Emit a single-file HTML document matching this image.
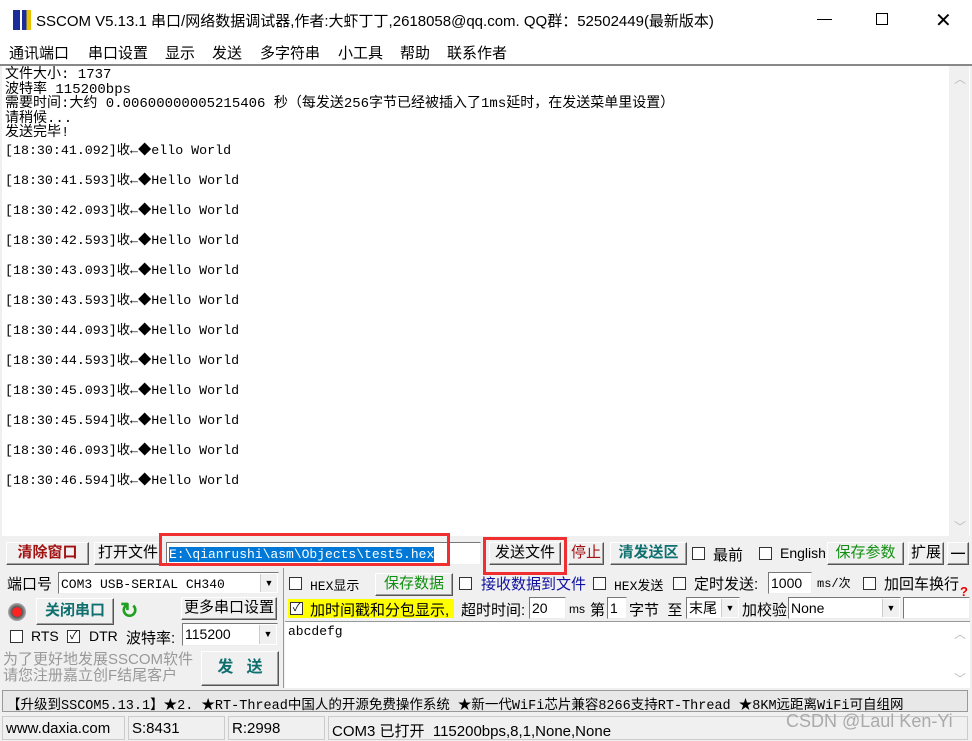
<!DOCTYPE html>
<html><head><meta charset="utf-8"><style>
*{margin:0;padding:0;box-sizing:border-box}
body{width:972px;height:741px;background:#f0f0f0;position:relative;overflow:hidden;font-family:"Liberation Sans","Noto Sans CJK SC",sans-serif;font-size:14px;color:#000}
.a{position:absolute;white-space:nowrap}
.m{font-family:"Liberation Mono","Noto Sans CJK SC",monospace;font-size:13px}
.btn{position:absolute;background:#f0f0f0;border:1px solid;border-color:#fff #555 #555 #fff;box-shadow:inset -1px -1px 0 #a0a0a0;text-align:center;white-space:nowrap}
.in{position:absolute;background:#fff;border:1px solid;border-color:#777 #eee #eee #777;white-space:nowrap;overflow:hidden;line-height:16px}
.cb{position:absolute;width:13px;height:13px;background:#fff;border:1px solid #333;font-size:11px;line-height:11px;text-align:center}
.dd{position:absolute;right:1px;top:1px;bottom:1px;width:17px;background:#f0f0f0;border-left:1px solid #ccc;font-size:9px;line-height:18px;text-align:center}
.mn{position:absolute;top:42px;font-size:15px}
</style></head><body>
<div class="a" style="left:0;top:0;width:972px;height:40px;background:#fff"></div>
<div class="a" style="left:13px;top:10px;width:18px;height:20px;background:linear-gradient(90deg,#1a2c9a 0 40%,#fff 40% 50%,#1a2c9a 50% 75%,#e8c000 75%)"></div>
<div class="a" style="left:36px;top:10px;font-size:15px">SSCOM V5.13.1 串口/网络数据调试器,作者:大虾丁丁,2618058@qq.com. QQ群：52502449(最新版本)</div>
<div class="a" style="left:817px;top:19px;width:15px;height:1px;background:#000"></div>
<div class="a" style="left:876px;top:13px;width:12px;height:12px;border:1px solid #000"></div>
<div class="a" style="left:935px;top:8px;font-size:20px;font-weight:100">✕</div>
<div class="a" style="left:0;top:40px;width:972px;height:25px;background:#fff"></div>
<div class="mn" style="left:9px">通讯端口</div>
<div class="mn" style="left:88px">串口设置</div>
<div class="mn" style="left:165px">显示</div>
<div class="mn" style="left:212px">发送</div>
<div class="mn" style="left:260px">多字符串</div>
<div class="mn" style="left:338px">小工具</div>
<div class="mn" style="left:400px">帮助</div>
<div class="mn" style="left:447px">联系作者</div>
<div class="a" style="left:0;top:64px;width:972px;height:2px;background:#888"></div>
<div class="a" style="left:2px;top:66px;width:968px;height:470px;background:#fff"></div>
<div class="a" style="left:949px;top:66px;width:20px;height:470px;background:#f0f0f0"></div>
<div class="a" style="left:954px;top:70px;color:#bbb;font-size:12px">︿</div>
<div class="a" style="left:954px;top:518px;color:#bbb;font-size:12px">﹀</div>
<div class="a m" style="left:5px;top:68px;line-height:14.5px;font-size:14px">文件大小: 1737<br>波特率 115200bps<br>需要时间:大约 0.00600000005215406 秒（每发送256字节已经被插入了1ms延时，在发送菜单里设置）<br>请稍候...<br>发送完毕!</div>
<div class="a m" style="left:5px;top:136px;line-height:30px;font-size:13.3px">[18:30:41.092]收←◆ello World<br>[18:30:41.593]收←◆Hello World<br>[18:30:42.093]收←◆Hello World<br>[18:30:42.593]收←◆Hello World<br>[18:30:43.093]收←◆Hello World<br>[18:30:43.593]收←◆Hello World<br>[18:30:44.093]收←◆Hello World<br>[18:30:44.593]收←◆Hello World<br>[18:30:45.093]收←◆Hello World<br>[18:30:45.594]收←◆Hello World<br>[18:30:46.093]收←◆Hello World<br>[18:30:46.594]收←◆Hello World</div>
<!-- row 1 -->
<div class="btn" style="left:6px;top:542px;width:83px;height:23px;color:#a01010;font-weight:bold;line-height:20px;font-size:15px">清除窗口</div>
<div class="btn" style="left:94px;top:542px;width:68px;height:23px;line-height:20px;font-size:15px">打开文件</div>
<div class="in" style="left:166px;top:542px;width:315px;height:23px;padding:2px 2px"><span class="m" style="background:#0078d7;color:#fff">E:\qianrushi\asm\Objects\test5.hex</span></div>
<div class="a" style="left:159px;top:533px;width:291px;height:33px;border:3px solid #f03030"></div>
<div class="btn" style="left:489px;top:542px;width:72px;height:23px;line-height:20px;font-size:15px">发送文件</div>
<div class="a" style="left:483px;top:537px;width:84px;height:38px;border:3px solid #f03030"></div>
<div class="btn" style="left:568px;top:542px;width:36px;height:23px;line-height:20px;color:#a01010;font-size:15px">停止</div>
<div class="btn" style="left:610px;top:542px;width:77px;height:23px;line-height:20px;color:#107070;font-weight:bold;font-size:15px">清发送区</div>
<div class="cb" style="left:692px;top:547px"></div><div class="a" style="left:713px;top:544px;font-size:15px">最前</div>
<div class="cb" style="left:759px;top:547px"></div><div class="a" style="left:780px;top:545px">English</div>
<div class="btn" style="left:827px;top:542px;width:77px;height:23px;line-height:20px;color:#109010;font-size:15px">保存参数</div>
<div class="btn" style="left:908px;top:542px;width:36px;height:23px;line-height:20px;font-size:15px">扩展</div>
<div class="btn" style="left:947px;top:542px;width:22px;height:23px;line-height:18px;font-weight:bold">—</div>
<!-- left panel -->
<div class="a" style="left:7px;top:573px;font-size:15px">端口号</div>
<div class="in" style="left:58px;top:572px;width:221px;height:22px;padding:2px 2px"><span class="m">COM3 USB-SERIAL CH340</span><div class="dd">▼</div></div>
<div class="a" style="left:8px;top:603px;width:18px;height:18px;border-radius:50%;background:radial-gradient(#f22 35%,#555 40%,#aaa 70%)"></div>
<div class="btn" style="left:36px;top:598px;width:78px;height:27px;line-height:24px;color:#107070;font-weight:bold;font-size:15px">关闭串口</div>
<div class="a" style="left:120px;top:598px;color:#20a020;font-size:22px;font-weight:bold">↻</div>
<div class="btn" style="left:181px;top:597px;width:96px;height:23px;line-height:20px;font-size:15px">更多串口设置</div>
<div class="cb" style="left:10px;top:630px"></div><div class="a" style="left:31px;top:628px">RTS</div>
<div class="cb" style="left:67px;top:630px">✓</div><div class="a" style="left:89px;top:628px">DTR</div>
<div class="a" style="left:126px;top:627px;font-size:15px">波特率:</div>
<div class="in" style="left:182px;top:623px;width:96px;height:23px;padding:2px 2px">115200<div class="dd">▼</div></div>
<div class="a" style="left:3px;top:652px;color:#999;line-height:16px;font-size:15px">为了更好地发展SSCOM软件<br>请您注册嘉立创F结尾客户</div>
<div class="btn" style="left:201px;top:651px;width:78px;height:35px;line-height:32px;color:#107070;font-weight:bold;font-size:16px">发&nbsp;&nbsp;&nbsp;送</div>
<!-- right panel -->
<div class="a" style="left:283px;top:568px;width:1px;height:120px;background:#999"></div>
<div class="cb" style="left:289px;top:577px"></div><div class="a m" style="left:310px;top:575px">HEX显示</div>
<div class="btn" style="left:375px;top:573px;width:78px;height:23px;line-height:20px;color:#109010;font-size:15px">保存数据</div>
<div class="cb" style="left:459px;top:577px"></div><div class="a" style="left:481px;top:573px;color:#1010a0;font-size:15px">接收数据到文件</div>
<div class="cb" style="left:593px;top:577px"></div><div class="a m" style="left:614px;top:575px">HEX发送</div>
<div class="cb" style="left:673px;top:577px"></div><div class="a" style="left:694px;top:573px;font-size:15px">定时发送:</div>
<div class="in" style="left:768px;top:572px;width:44px;height:22px;padding:2px">1000</div>
<div class="a m" style="left:817px;top:574px;font-size:12px">ms/次</div>
<div class="cb" style="left:863px;top:577px"></div><div class="a" style="left:884px;top:573px;font-size:15px">加回车换行</div>
<div class="a" style="left:960px;top:584px;color:#e00;font-weight:bold;font-size:13px">?</div>
<div class="a" style="left:288px;top:599px;width:166px;height:19px;background:#ff0"></div>
<div class="cb" style="left:290px;top:602px">✓</div><div class="a" style="left:310px;top:599px;font-size:15px">加时间戳和分包显示,</div>
<div class="a" style="left:461px;top:599px;font-size:15px">超时时间:</div>
<div class="in" style="left:529px;top:597px;width:37px;height:22px;padding:2px">20</div>
<div class="a" style="left:569px;top:602px;font-size:12px">ms</div>
<div class="a" style="left:590px;top:599px;font-size:15px">第</div>
<div class="in" style="left:607px;top:597px;width:20px;height:22px;padding:2px">1</div>
<div class="a" style="left:629px;top:599px;font-size:15px">字节&nbsp;&nbsp;至</div>
<div class="in" style="left:686px;top:597px;width:54px;height:22px;padding:2px">末尾<div class="dd">▼</div></div>
<div class="a" style="left:742px;top:599px;font-size:15px">加校验</div>
<div class="in" style="left:788px;top:597px;width:113px;height:22px;padding:2px">None<div class="dd">▼</div></div>
<div class="in" style="left:903px;top:597px;width:67px;height:22px"></div>
<div class="a" style="left:285px;top:621px;width:685px;height:67px;background:#fff;border-top:1px solid #999"></div>
<div class="a m" style="left:288px;top:624px">abcdefg</div>
<div class="a" style="left:954px;top:625px;color:#bbb;font-size:12px">︿</div>
<div class="a" style="left:954px;top:670px;color:#bbb;font-size:12px">﹀</div>
<!-- marquee -->
<div class="a m" style="left:2px;top:690px;width:966px;height:22px;border:1px solid #999;background:#e8e8e8;padding:2px 4px;font-size:13.5px">【升级到SSCOM5.13.1】★2. ★RT-Thread中国人的开源免费操作系统 ★新一代WiFi芯片兼容8266支持RT-Thread ★8KM远距离WiFi可自组网</div>
<!-- status -->
<div class="a" style="left:2px;top:716px;width:123px;height:24px;border:1px solid #ccc;padding:3px 3px;font-size:15px">www.daxia.com</div>
<div class="a" style="left:128px;top:716px;width:97px;height:24px;border:1px solid #ccc;padding:3px 3px;font-size:15px">S:8431</div>
<div class="a" style="left:228px;top:716px;width:97px;height:24px;border:1px solid #ccc;padding:3px 3px;font-size:15px">R:2998</div>
<div class="a" style="left:328px;top:716px;width:640px;height:24px;border:1px solid #ccc;padding:3px 3px;font-size:15px">COM3 已打开&nbsp;&nbsp;115200bps,8,1,None,None</div>
<div class="a" style="left:786px;top:711px;color:#aaa;font-size:18px">CSDN @Laul Ken-Yi</div>
</body></html>
